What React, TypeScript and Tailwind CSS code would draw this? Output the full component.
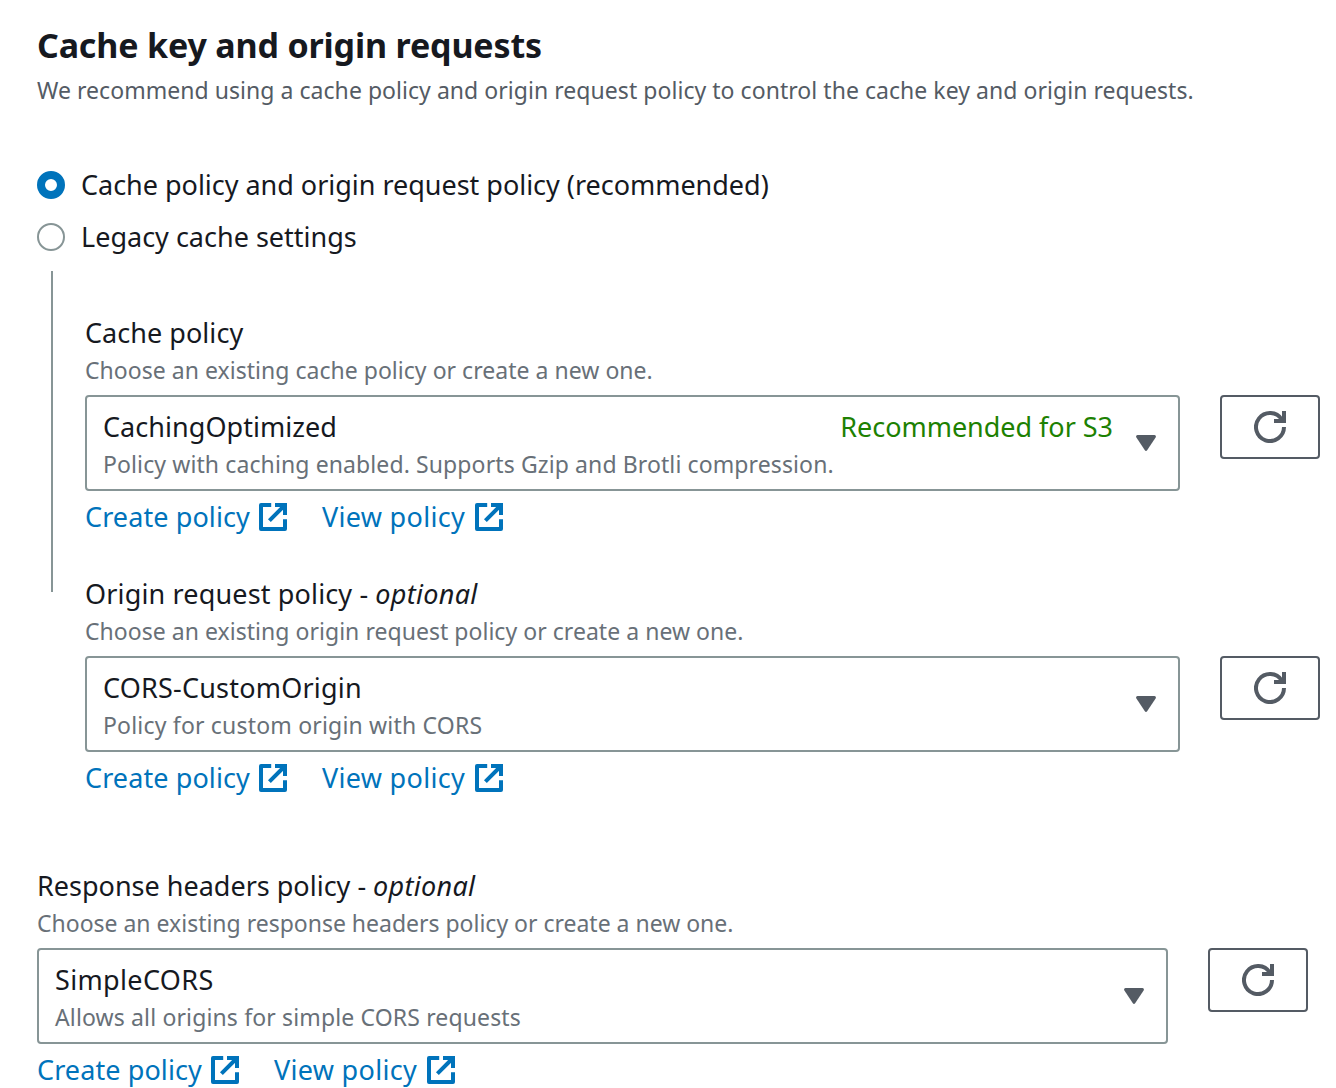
function ExternalIcon() {
  return (
    <svg className="size-7 shrink-0" viewBox="0 0 28 28" fill="none" stroke="currentColor" strokeWidth="4">
      <path strokeLinejoin="round" d="M12.2 2H2v24h24V16.2" />
      <path d="M16 2h10v10M26 2 10.4 17.6" />
    </svg>
  );
}

function RefreshButton() {
  return (
    <button
      aria-label="Refresh"
      className="flex h-16 w-[100px] shrink-0 items-center justify-center rounded border-2 border-[#545b64] text-[#545b64]"
    >
      <svg className="size-8" viewBox="0 0 32 32" fill="none" stroke="currentColor" strokeWidth="4">
        <path d="M30 16A14 14 0 1 1 27.8 8.5" />
        <path d="M30 0v10H20" />
      </svg>
    </button>
  );
}

function Links() {
  return (
    <div className="mt-[7px] flex h-[38px] items-center text-[27px] leading-[38px] text-[#0073bb]">
      <a className="flex items-center">
        <span className="w-[174px] tracking-[0.094px]">Create policy</span>
        <ExternalIcon />
      </a>
      <a className="ml-[34px] flex items-center">
        <span className="w-[154px] pl-px tracking-[0.3px]">View policy</span>
        <ExternalIcon />
      </a>
    </div>
  );
}

type FieldProps = {
  label: string;
  optional?: boolean;
  hint: string;
  value: string;
  detail: string;
  tag?: string;
  labelTracking?: string;
  hintTracking: string;
  valueTracking: string;
  detailTracking: string;
  width: string;
};

function PolicyField(p: FieldProps) {
  return (
    <section>
      <h2 className="flex text-[27px] leading-[38px] whitespace-nowrap">
        <span className={p.labelTracking}>{p.label}</span>
        {p.optional && <em className="ml-[7px] tracking-[0.295px]">optional</em>}
      </h2>
      <p className={`text-[23px] leading-9 whitespace-nowrap text-[#687078] ${p.hintTracking}`}>{p.hint}</p>
      <div className="mt-[7px] flex items-start gap-10">
        <div
          className={`flex h-24 shrink-0 items-center rounded border-2 border-[#879596] pr-[22px] pl-4 whitespace-nowrap ${p.width}`}
        >
          <div className="h-[68px] flex-1">
            <div className="flex justify-between pr-[23px] text-[27px] leading-9">
              <span className={p.valueTracking}>{p.value}</span>
              {p.tag && <span className="tracking-[-0.03px] text-[#1d8102]">{p.tag}</span>}
            </div>
            <div className={`text-[23px] leading-[38px] text-[#687078] ${p.detailTracking}`}>{p.detail}</div>
          </div>
          <svg className="h-4 w-5 shrink-0 text-[#545b64]" viewBox="0 0 20 16" fill="currentColor">
            <path d="M1.5 0h17Q20.6.4 19.6 2.4L11.3 15q-1.3 1.8-2.6 0L.4 2.4Q-.6.4 1.5 0z" />
          </svg>
        </div>
        <RefreshButton />
      </div>
      <Links />
    </section>
  );
}

export default function App() {
  return (
    <main className="h-[1088px] w-[1336px] overflow-hidden bg-white pt-[23px] pl-[37px] font-['Noto_Sans',sans-serif] text-[#16191f]">
      <h1 className="text-[34px] leading-[44px] font-bold tracking-[-0.16px]">Cache key and origin requests</h1>
      <p className="text-[23px] leading-[46px] tracking-[0.045px] whitespace-nowrap text-[#545b64]">
        We recommend using a cache policy and origin request policy to control the cache key and origin requests.
      </p>

      <div className="mt-[58px] flex flex-col gap-6 text-[27px] leading-7">
        <label className="flex items-center gap-4">
          <span className="size-7 rounded-full border-8 border-[#0073bb]" />
          <span className="tracking-[-0.02px]">Cache policy and origin request policy (recommended)</span>
        </label>
        <label className="flex items-center gap-4">
          <span className="size-7 rounded-full border-2 border-[#879596]" />
          <span>Legacy cache settings</span>
        </label>
      </div>

      <div className="mt-5 flex pl-[14px]">
        <div className="h-[321px] w-0.5 shrink-0 bg-[#879596]" />
        <div className="flex flex-col gap-[39px] pt-[43px] pl-8">
          <PolicyField
            label="Cache policy"
            hint="Choose an existing cache policy or create a new one."
            value="CachingOptimized"
            detail="Policy with caching enabled. Supports Gzip and Brotli compression."
            tag="Recommended for S3"
            labelTracking="tracking-[0.04px]"
            hintTracking="tracking-[0.03px]"
            valueTracking="tracking-[0.04px]"
            detailTracking="tracking-[0.11px]"
            width="w-[1095px]"
          />
          <PolicyField
            label="Origin request policy -"
            optional
            hint="Choose an existing origin request policy or create a new one."
            value="CORS-CustomOrigin"
            detail="Policy for custom origin with CORS"
            labelTracking="tracking-[0.15px]"
            hintTracking="tracking-[0.035px]"
            valueTracking="tracking-[0.2px]"
            detailTracking="tracking-[0.19px]"
            width="w-[1095px]"
          />
        </div>
      </div>

      <div className="mt-[70px]">
        <PolicyField
          label="Response headers policy -"
          optional
          hint="Choose an existing response headers policy or create a new one."
          value="SimpleCORS"
          detail="Allows all origins for simple CORS requests"
          hintTracking="tracking-[-0.01px]"
          valueTracking="tracking-[0.35px]"
          detailTracking="tracking-[0.14px]"
          width="w-[1131px]"
        />
      </div>
    </main>
  );
}
